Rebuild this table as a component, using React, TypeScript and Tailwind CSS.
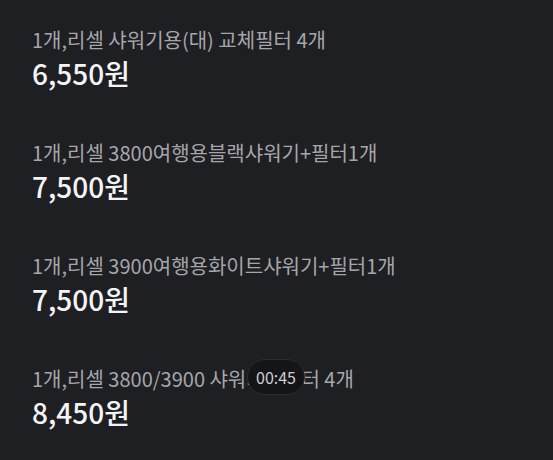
import React from 'react';

type Item = {
  title: string;
  price: string;
};

const items: Item[] = [
  { title: '1개,리셀 샤워기용(대) 교체필터 4개', price: '6,550원' },
  { title: '1개,리셀 3800여행용블랙샤워기+필터1개', price: '7,500원' },
  { title: '1개,리셀 3900여행용화이트샤워기+필터1개', price: '7,500원' },
  { title: '1개,리셀 3800/3900 샤워기용필터 4개', price: '8,450원' },
];

function Row({ item }: { item: Item }) {
  return (
    <div className="flex flex-col h-[113px] pt-[25px]">
      <div className="text-[20px] leading-[30px] text-[#a6a6a9] tracking-[0px]">{item.title}</div>
      <div className="text-[28px] leading-[36px] font-medium text-[#f4f4f5]">{item.price}</div>
    </div>
  );
}

export default function App() {
  return (
    <div
      className="relative w-[553px] h-[460px] overflow-hidden bg-[#1e1f23] px-[32px]"
      style={{ fontFamily: '"Noto Sans CJK KR", "Noto Sans", sans-serif' }}
    >
      {items.map((item, i) => (
        <Row key={i} item={item} />
      ))}
      <div className="absolute left-[247px] top-[359px] w-[58px] h-[36px] rounded-full bg-[#141518] border border-[#2c2d31] flex items-center justify-center text-[16px] text-[#cfcfd1]">
        00:45
      </div>
    </div>
  );
}
